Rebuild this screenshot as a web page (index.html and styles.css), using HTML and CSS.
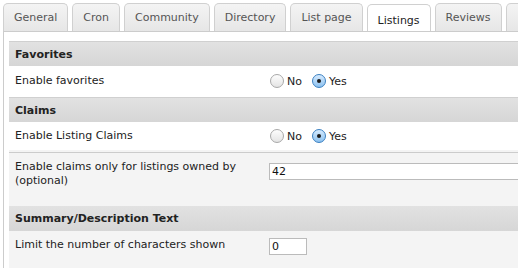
FILE: index.html
```html
<!DOCTYPE html>
<html lang="en">
<head>
    <meta charset="UTF-8">
    <title>Settings - Listings</title>
    <link rel="stylesheet" href="styles.css">
</head>
<body>
    <ul class="tabs">
        <li>General</li>
        <li>Cron</li>
        <li>Community</li>
        <li>Directory</li>
        <li>List page</li>
        <li class="active">Listings</li>
        <li>Reviews</li>
        <li class="cut">&nbsp;</li>
    </ul>
    <div class="panel">
        <div class="section">Favorites</div>
        <div class="row white">
            <div class="label">Enable favorites</div>
            <div class="field">
                <span class="radio"></span><span class="opt">No</span>
                <span class="radio checked"></span><span class="opt">Yes</span>
            </div>
        </div>
        <div class="section">Claims</div>
        <div class="row white short">
            <div class="label">Enable Listing Claims</div>
            <div class="field">
                <span class="radio"></span><span class="opt">No</span>
                <span class="radio checked"></span><span class="opt">Yes</span>
            </div>
        </div>
        <div class="row tall bordered">
            <div class="label">Enable claims only for listings owned by (optional)</div>
            <div class="field"><input type="text" class="wide" value="42"></div>
        </div>
        <div class="section">Summary/Description Text</div>
        <div class="row tall last">
            <div class="label">Limit the number of characters shown</div>
            <div class="field"><input type="text" class="small" value="0"></div>
        </div>
    </div>
</body>
</html>
```
FILE: styles.css
```css
body {
    margin: 0;
    padding: 0;
    background: #fff;
    font-family: "DejaVu Sans", Verdana, sans-serif;
    font-size: 11px;
    color: #222;
    overflow: hidden;
    height: 268px;
}
.tabs {
    list-style: none;
    margin: 0;
    padding: 3px 0 0 3px;
    display: flex;
    gap: 4px;
    height: 28px;
    white-space: nowrap;
    overflow: hidden;
}
.tabs li {
    box-sizing: border-box;
    height: 28px;
    padding: 7px 10px 0;
    border: 1px solid #d0d0d0;
    border-bottom: none;
    border-radius: 5px 5px 0 0;
    background: linear-gradient(#f4f4f4, #e6e6e6);
    color: #555;
    flex-shrink: 0;
}
.tabs li.active {
    margin-top: 1px;
    padding-top: 9px;
    background: #fff;
    color: #222;
}
.tabs li.cut {
    width: 20px;
}
.panel {
    border-top: 1px solid #ccc;
    border-left: 1px solid #ccc;
    margin-left: 3px;
    padding: 9px 0 0 5px;
    background: #fff;
}
.section {
    height: 25px;
    line-height: 25px;
    padding-left: 6px;
    font-weight: bold;
    background: linear-gradient(#e2e2e2, #d6d6d6);
    border-top: 1px solid #d0d0d0;
    box-sizing: border-box;
}
.row {
    display: flex;
    background: #f4f4f4;
}
.row.white {
    background: #fff;
    height: 30px;
    align-items: center;
    margin-bottom: 1px;
}
.row.white.short {
    height: 28px;
    margin-bottom: 0;
    border-bottom: 2px solid #f4f4f4;
}
.row.tall {
    box-sizing: border-box;
    padding-top: 6px;
}
.row.tall.bordered {
    border-top: 1px solid #ccc;
    height: 54px;
    padding-top: 7px;
}
.row.tall.bordered input {
    margin-top: 3px;
}
.row.tall.last {
    height: 40px;
}
.row.tall.bordered + .section {
    border-top: none;
}
.label {
    flex-shrink: 0;
    width: 246px;
    padding-left: 6px;
    padding-right: 8px;
    line-height: 14px;
}
.row.tall.last .label {
    padding-top: 1px;
}
.field {
    display: flex;
    align-items: center;
    flex: 1;
    min-width: 0;
    overflow: hidden;
}
.row.tall .field {
    align-items: flex-start;
}
.radio {
    box-sizing: border-box;
    flex-shrink: 0;
    width: 14px;
    height: 14px;
    border-radius: 50%;
    border: 1px solid #a8a8a8;
    background: linear-gradient(#fdfdfd, #e4e4e4);
    margin-right: 3px;
    margin-left: 1px;
    position: relative;
}
.radio.checked {
    border-color: #3a7fc0;
    background: linear-gradient(#d6ebff, #8cc1ef);
}
.radio.checked::after {
    content: '';
    position: absolute;
    left: 4px;
    top: 4px;
    width: 4px;
    height: 4px;
    border-radius: 50%;
    background: #1a1a1a;
}
.opt {
    margin-right: 9px;
    color: #222;
}
input[type="text"] {
    box-sizing: border-box;
    flex-shrink: 0;
    height: 17px;
    border: 1px solid #bbb;
    padding: 0 2px;
    font-family: "DejaVu Sans", Verdana, sans-serif;
    font-size: 11px;
    color: #111;
    background: #fff;
    margin: 1px 0 0;
}
input.wide {
    width: 260px;
}
input.small {
    width: 38px;
}
```
